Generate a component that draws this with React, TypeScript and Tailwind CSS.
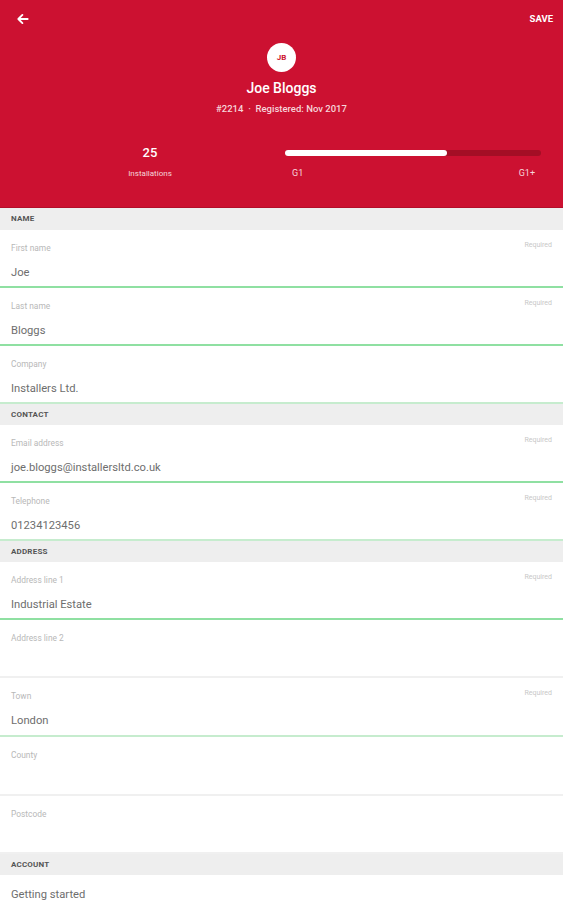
import React from "react";

type Field = { label: string; value?: string; required?: boolean; line: "green" | "lightgreen" | "gray"; tall?: boolean };

const Section = ({ title, tall }: { title: string; tall?: boolean }) => (
  <div className={`${tall ? "h-[22px]" : "h-[21px]"} bg-[#eeeeee] flex items-center px-[11px]`}>
    <span className="text-[8px] font-bold text-[#555] tracking-[0.2px]">{title}</span>
  </div>
);

const Row = ({ f }: { f: Field }) => {
  const lineCls =
    f.line === "green" ? "border-[#8fe0a2]" : f.line === "lightgreen" ? "border-[#c6ecce]" : "border-[#f0f0f0]";
  return (
    <div className={`${f.tall ? "h-[59px]" : "h-[58px]"} bg-white border-b-2 ${lineCls} relative px-[11px] pt-[12px]`}>
      <div className="text-[8.4px] leading-[12px] text-[#b8b8b8]">{f.label}</div>
      {f.required && (
        <div className="absolute right-[11px] top-[10px] text-[7px] text-[#c8c8c8]">Required</div>
      )}
      {f.value && <div className="mt-[11px] text-[11.2px] leading-[16px] text-[#6e6e6e]">{f.value}</div>}
    </div>
  );
};

export default function App() {
  const name: Field[] = [
    { label: "First name", value: "Joe", required: true, line: "green" },
    { label: "Last name", value: "Bloggs", required: true, line: "green" },
    { label: "Company", value: "Installers Ltd.", line: "lightgreen" },
  ];
  const contact: Field[] = [
    { label: "Email address", value: "joe.bloggs@installersltd.co.uk", required: true, line: "green" },
    { label: "Telephone", value: "01234123456", required: true, line: "lightgreen" },
  ];
  const address: Field[] = [
    { label: "Address line 1", value: "Industrial Estate", required: true, line: "green" },
    { label: "Address line 2", line: "gray" },
    { label: "Town", value: "London", required: true, line: "lightgreen", tall: true },
    { label: "County", line: "gray", tall: true },
    { label: "Postcode", line: "gray" },
  ];
  return (
    <div className="w-[563px] h-[900px] overflow-hidden bg-white" style={{ fontFamily: "Roboto, 'Liberation Sans', sans-serif" }}>
      <div className="h-[208px] bg-[#cc1131] border-b border-[#b30e2a] flex flex-col">
        <div className="h-[38px] flex items-center justify-between pl-[16px] pr-[10px]">
          <svg width="14" height="14" viewBox="0 0 24 24" fill="none" stroke="white" strokeWidth="3.2" strokeLinecap="round" strokeLinejoin="round">
            <path d="M20 12H5M11 5l-7 7 7 7" />
          </svg>
          <span className="text-[9.5px] font-bold text-white">SAVE</span>
        </div>
        <div className="flex flex-col items-center">
          <div className="w-[29px] h-[29px] rounded-full bg-white flex items-center justify-center mt-[5px]">
            <span className="text-[8px] font-bold text-[#cc1131]">JB</span>
          </div>
          <div className="mt-[7px] text-[14px] leading-[18px] font-medium text-white">Joe Bloggs</div>
          <div className="mt-[6px] text-[9.5px] leading-[12px] font-medium text-[#f6d5da]">#2214 &nbsp;·&nbsp; Registered: Nov 2017</div>
        </div>
        <div className="mt-[30px] flex px-[22px]">
          <div className="w-[256px] flex flex-col items-center">
            <div className="text-[13px] leading-[16px] font-medium text-white">25</div>
            <div className="mt-[8px] text-[8px] leading-[10px] text-[#f6d5da]">Installations</div>
          </div>
          <div className="flex-1 pl-[7px]">
            <div className="mt-[5px] h-[6px] w-[256px] rounded-full bg-[#a40e25]">
              <div className="h-[6px] w-[162px] rounded-full bg-white" />
            </div>
            <div className="mt-[11px] flex justify-between w-[250px] pl-[7px]">
              <span className="text-[9px] text-[#f6d5da]">G1</span>
              <span className="text-[9px] text-[#f6d5da]">G1+</span>
            </div>
          </div>
        </div>
      </div>
      <Section title="NAME" tall />
      {name.map((f) => (
        <Row key={f.label} f={f} />
      ))}
      <Section title="CONTACT" />
      {contact.map((f) => (
        <Row key={f.label} f={f} />
      ))}
      <Section title="ADDRESS" />
      {address.map((f) => (
        <Row key={f.label} f={f} />
      ))}
      <Section title="ACCOUNT" />
      <div className="bg-white px-[11px] pt-[12px] text-[11.2px] text-[#6e6e6e]">Getting started</div>
    </div>
  );
}
